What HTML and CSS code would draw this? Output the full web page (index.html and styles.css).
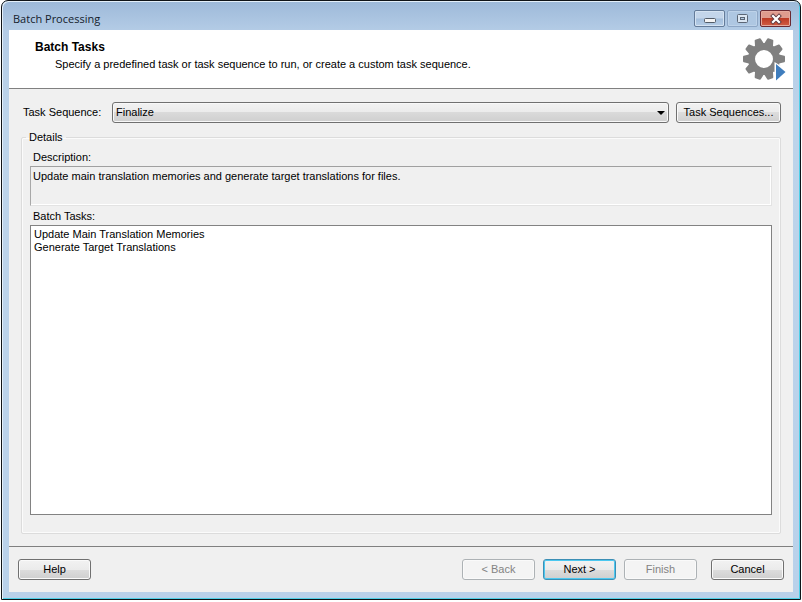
FILE: index.html
```html
<!DOCTYPE html>
<html lang="en">
<head>
<meta charset="utf-8">
<title>Batch Processing</title>
<link rel="stylesheet" href="styles.css">
</head>
<body>
<main class="window">
  <header class="titlebar">
    <h1 class="title">Batch Processing</h1>
    <div class="controls">
      <button class="control" type="button" aria-label="Minimize">
        <svg width="14" height="12" viewBox="0 0 14 12"><rect x="1.5" y="5.5" width="11" height="4" rx="1" fill="#f4f4f4" stroke="#535c68"/></svg>
      </button>
      <button class="control control-dim" type="button" aria-label="Maximize">
        <svg width="14" height="12" viewBox="0 0 14 12"><rect x="1.5" y="1.5" width="10" height="8" rx="1" fill="#dbe6f2" stroke="#5b6675"/><rect x="4.500" y="4.500" width="4" height="2" fill="#b4cae2" stroke="#5b6675"/></svg>
      </button>
      <button class="control control-close" type="button" aria-label="Close">
        <svg width="14" height="12" viewBox="0 0 14 12"><path d="M4 3 10 9M10 3 4 9" stroke="#5f3a40" stroke-width="4" stroke-linecap="square"/><path d="M4 3 10 9M10 3 4 9" stroke="#fff" stroke-width="2.200" stroke-linecap="square"/></svg>
      </button>
    </div>
  </header>

  <div class="client">
    <section class="banner">
      <div>
        <h2 class="banner-title">Batch Tasks</h2>
        <p class="banner-text">Specify a predefined task or task sequence to run, or create a custom task sequence.</p>
      </div>
      <svg class="gear" width="44" height="44" viewBox="-22 -22 44 44" aria-hidden="true">
        <defs><path id="tooth" d="M-4.800-14-3.200-20.300Q-3-21-2.300-21H2.300Q3-21 3.200-20.300L4.800-14Z"/></defs>
        <g fill="#808080">
          <circle r="12.500" fill="none" stroke="#808080" stroke-width="7"/>
          <use href="#tooth" transform="rotate(18)"/>
          <use href="#tooth" transform="rotate(54)"/>
          <use href="#tooth" transform="rotate(90)"/>
          <use href="#tooth" transform="rotate(126)"/>
          <use href="#tooth" transform="rotate(162)"/>
          <use href="#tooth" transform="rotate(198)"/>
          <use href="#tooth" transform="rotate(234)"/>
          <use href="#tooth" transform="rotate(270)"/>
          <use href="#tooth" transform="rotate(306)"/>
          <use href="#tooth" transform="rotate(342)"/>
        </g>
        <path d="M10.500 3 22 10V22H10.500Z" fill="#fff"/>
        <path d="M12 5 21.500 13 12 21.500Z" fill="#3f7dbd"/>
      </svg>
    </section>

    <form class="content">
      <div class="sequence">
        <label for="sequence">Task Sequence:</label>
        <div class="combo">
          <select id="sequence"><option>Finalize</option></select>
          <svg class="combo-arrow" width="8" height="4" viewBox="0 0 8 4" aria-hidden="true"><path d="M0 0H8L4 4Z"/></svg>
        </div>
        <button class="button button-wide" type="button">Task Sequences...</button>
      </div>

      <fieldset class="details">
        <legend>Details</legend>
        <label class="field-label" for="description">Description:</label>
        <textarea class="description" id="description" readonly>Update main translation memories and generate target translations for files.</textarea>
        <label class="field-label" for="tasks">Batch Tasks:</label>
        <select class="tasks" id="tasks" size="8">
          <option>Update Main Translation Memories</option>
          <option>Generate Target Translations</option>
        </select>
      </fieldset>
    </form>

    <footer class="footer">
      <button class="button" type="button">Help</button>
      <div class="wizard">
        <button class="button" type="button" disabled>&lt; Back</button>
        <button class="button button-default" type="button">Next &gt;</button>
        <button class="button" type="button" disabled>Finish</button>
      </div>
      <button class="button" type="button">Cancel</button>
    </footer>
  </div>
</main>
</body>
</html>
```

FILE: styles.css
```css
* {
  box-sizing: border-box;
}

body,
button,
select,
textarea {
  margin: 0;
  font: 11px/13px "Liberation Sans", Arial, sans-serif;
  color: #000;
}

body {
  height: 100vh;
  padding: 0 1px 2px;
  background: #fff;
}

.window {
  display: flex;
  flex-direction: column;
  height: 100%;
  padding: 0 7px 7px;
  border: 1px solid #101418;
  border-radius: 7px 7px 0 0;
  background: linear-gradient(#9db9d9, #b4cce6 30px, #bdd4ea 120px, #b9d1ea);
  box-shadow: inset 1px 1px #e4f0fa, inset -1px -1px #4fd0e8;
}

.titlebar {
  display: flex;
  justify-content: space-between;
  height: 29px;
  padding-left: 4px;
}

.title {
  margin: 10px 0 0;
  font: 11px/15px "Open Sans", "Liberation Sans", sans-serif;
  color: #141c2c;
}

.controls {
  display: flex;
  gap: 2px;
  padding: 9px 2px 0 0;
}

.control {
  display: flex;
  align-items: center;
  justify-content: center;
  width: 31px;
  height: 17px;
  padding: 0;
  border: 1px solid #647b99;
  border-radius: 2px;
  background: linear-gradient(#c3d5ea 48%, #a3bedc 52%, #b6cde6);
  box-shadow: inset 0 0 0 1px #d5e3f2;
}

.control svg {
  flex: none;
}

.control-dim {
  border-color: #8da6c5;
  background: #aec7e2;
  box-shadow: inset 0 0 0 1px #bdd2e9;
}

.control-close {
  border-color: #6b2932;
  background: linear-gradient(#df9b8e 45%, #bd3b26 50%, #d25e45);
  box-shadow: inset 0 0 0 1px #e5a99d;
}

.client {
  display: flex;
  flex: 1;
  flex-direction: column;
  background: #f0f0f0;
}

.banner {
  display: flex;
  justify-content: space-between;
  height: 59px;
  padding: 7px 7px 0 26px;
  border-bottom: 1px solid #808080;
  background: #fff;
}

.banner-title {
  margin: 4px 0;
  font-size: 12px;
  line-height: 13px;
}

.banner-text {
  margin: 0 0 0 20px;
}

.content {
  display: flex;
  flex: 1;
  flex-direction: column;
  padding: 13px 12px 12px;
}

.sequence {
  display: flex;
  align-items: center;
  padding-left: 2px;
}

.sequence label {
  width: 89px;
}

.combo {
  position: relative;
  flex: 1;
  margin-right: 7px;
}

.combo select {
  display: block;
  width: 100%;
  height: 21px;
  padding: 0 20px 0 3px;
  appearance: none;
  border: 1px solid #707070;
  border-radius: 3px;
  background: linear-gradient(#f2f2f2, #ebebeb 50%, #dadada 50%, #cfcfcf);
  box-shadow: inset 0 0 0 1px #f8f8f8;
}

.combo-arrow {
  position: absolute;
  top: 9px;
  right: 4px;
  pointer-events: none;
}

.button {
  width: 73px;
  height: 21px;
  padding: 0;
  border: 1px solid #707070;
  border-radius: 3px;
  background: linear-gradient(#f2f2f2, #ebebeb 50%, #dddddd 50%, #cfcfcf);
  box-shadow: inset 0 0 0 1px #fafafa;
}

.button:disabled {
  border-color: #adb2b5;
  background: #f4f4f4;
  color: #838383;
}

.button-default {
  border-color: #3c8fb5;
  box-shadow: inset 0 0 0 1px #4cc8f0;
}

.button-wide {
  width: 105px;
}

.details {
  display: flex;
  flex: 1;
  flex-direction: column;
  min-width: 0;
  margin: 8px 0 0;
  padding: 7px 8px 18px;
  border: 1px solid #dcdcdc;
  border-radius: 2px;
  box-shadow: inset 0 0 0 1px #fbfbfb;
}

.details legend {
  padding: 0 3px;
  margin-left: -4px;
}

.field-label {
  margin-bottom: 2px;
  padding-left: 3px;
}

.description {
  height: 40px;
  margin-bottom: 4px;
  padding: 3px 2px;
  border: 1px solid;
  border-color: #a0a0a0 #e3e3e3 #e3e3e3 #a8a8a8;
  background: #f0f0f0;
  box-shadow: inset -1px -1px #fff;
  resize: none;
  outline: none;
}

.tasks {
  flex: 1;
  padding: 2px 0;
  border: 1px solid #828282;
  border-radius: 0;
  background: #fff;
  outline: none;
}

.tasks option {
  min-height: 13px;
  padding: 0 3px;
  line-height: 13px;
}

.footer {
  display: flex;
  height: 46px;
  padding: 12px 9px 0;
  border-top: 1px solid #808080;
}

.wizard {
  display: flex;
  gap: 8px;
  margin: 0 14px 0 auto;
}
```
